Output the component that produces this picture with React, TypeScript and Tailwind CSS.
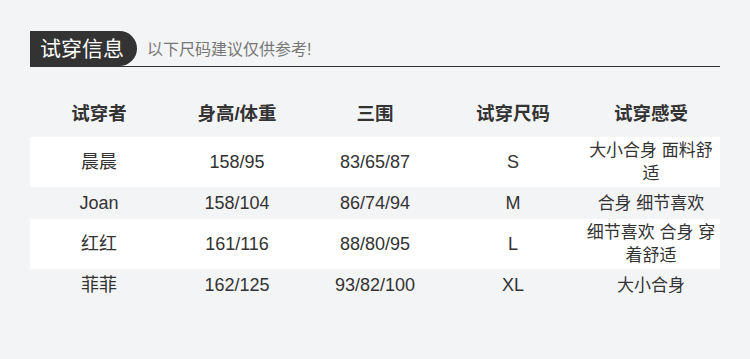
const rows = [
  { name: "晨晨", hw: "158/95", bwh: "83/65/87", size: "S", feel: "大小合身 面料舒适" },
  { name: "Joan", hw: "158/104", bwh: "86/74/94", size: "M", feel: "合身 细节喜欢" },
  { name: "红红", hw: "161/116", bwh: "88/80/95", size: "L", feel: "细节喜欢 合身 穿着舒适" },
  { name: "菲菲", hw: "162/125", bwh: "93/82/100", size: "XL", feel: "大小合身" },
];

const heads = ["试穿者", "身高/体重", "三围", "试穿尺码", "试穿感受"];

export default function App() {
  return (
    <div
      className="w-[750px] h-[359px] bg-[#f3f4f6] px-[30px] pt-[31px] text-[#333]"
      style={{ fontFamily: '"Liberation Sans", "Noto Sans CJK SC", sans-serif' }}
    >
      {/* Title */}
      <div className="flex items-center border-b border-[#333]">
        <div className="h-[35px] pl-[10px] pr-[13px] flex items-center bg-[#333] text-white text-[21px] rounded-tl-[12px] rounded-r-full">
          试穿信息
        </div>
        <div className="ml-[10px] text-[16px] text-[#777] pt-[3px]">以下尺码建议仅供参考!</div>
      </div>

      {/* Table */}
      <div className="mt-[24px]">
        <div className="grid grid-cols-5 h-[46px] items-center">
          {heads.map((h) => (
            <div key={h} className="text-center text-[18.5px] font-bold">
              {h}
            </div>
          ))}
        </div>
        {rows.map((r, i) => (
          <div
            key={r.name}
            className={
              "grid grid-cols-5 items-center min-h-[32px] py-[2px] text-[18px] leading-[23px] " +
              (i % 2 === 0 ? "bg-white" : "bg-transparent")
            }
          >
            <div className="text-center">{r.name}</div>
            <div className="text-center">{r.hw}</div>
            <div className="text-center">{r.bwh}</div>
            <div className="text-center">{r.size}</div>
            <div className="text-center text-[17px]">{r.feel}</div>
          </div>
        ))}
      </div>
    </div>
  );
}
